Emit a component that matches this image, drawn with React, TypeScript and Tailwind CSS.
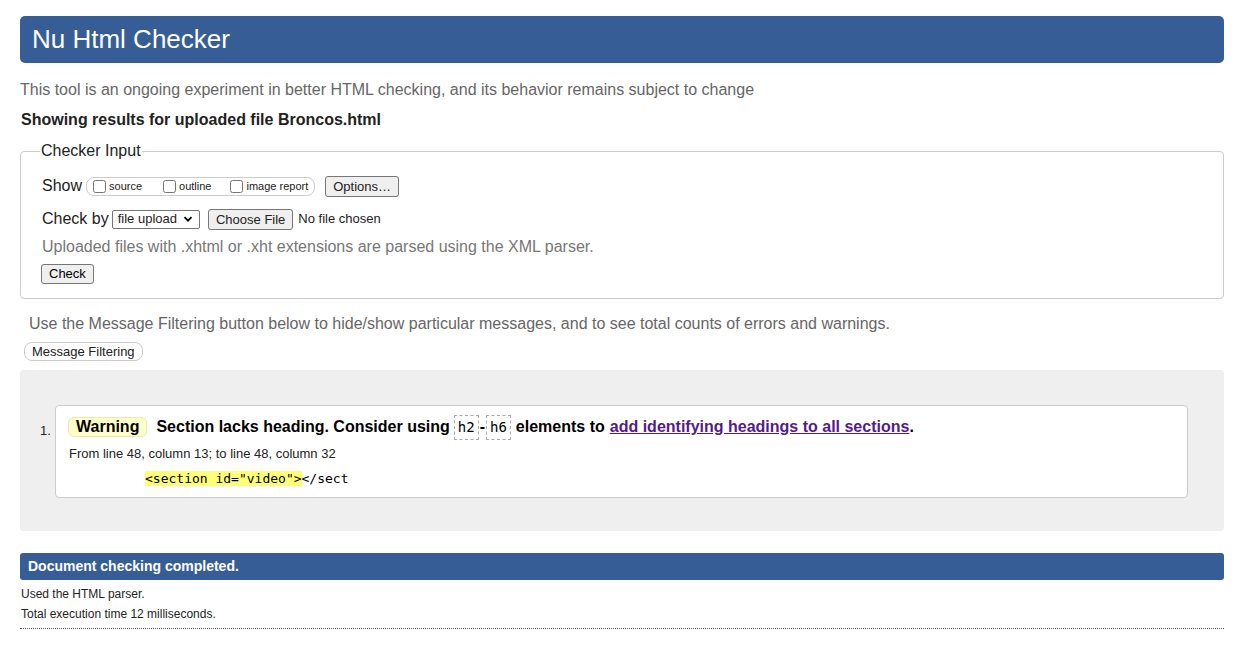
export default function App() {
  return (
    <div className="min-h-[663px] bg-white pl-5 pr-[15px] pt-4 text-black" style={{ fontFamily: '"Liberation Sans", Arial, sans-serif' }}>
      <h1 className="flex h-[47px] items-center rounded-[5px] bg-[#365d95] px-3 text-[26px] font-normal text-white">Nu Html Checker</h1>

      <p className="mt-[17px] text-[16px] leading-[20px] text-[#666]">
        This tool is an ongoing experiment in better HTML checking, and its behavior remains subject to change
      </p>
      <p className="mt-[10px] pl-px text-[16px] font-bold leading-[20px] text-[#222]">Showing results for uploaded file Broncos.html</p>

      <fieldset className="mt-[12px] rounded-[4px] border border-[#ccc] pb-[13px] pl-[21px] pr-4 pt-[14px]">
        <legend className="-ml-[2px] px-[1px] text-[16px] leading-[18px] text-[#222]">Checker Input</legend>
        <div className="flex items-center text-[16px] text-[#222]">
          <span>Show</span>
          <span className="ml-[4px] flex h-[19px] items-center rounded-[8px] border border-[#ccc] pl-[6px] pr-[6px] text-[11px]">
            <label className="flex items-center">
              <input type="checkbox" className="m-0 h-[13px] w-[13px]" />
              <span className="ml-[3px]">source</span>
            </label>
            <label className="ml-[21px] flex items-center">
              <input type="checkbox" className="m-0 h-[13px] w-[13px]" />
              <span className="ml-[3px]">outline</span>
            </label>
            <label className="ml-[19px] flex items-center">
              <input type="checkbox" className="m-0 h-[13px] w-[13px]" />
              <span className="ml-[3px]">image report</span>
            </label>
          </span>
          <button className="ml-[10px] h-[21px] rounded-[3px] border border-[#767676] bg-[#efefef] px-[7px] text-[13px] leading-[17px]">Options…</button>
        </div>
        <div className="mt-[9px] flex items-center text-[16px] text-[#222]">
          <span>Check by</span>
          <span className="ml-[3px] flex h-[19px] items-center rounded-[2px] border border-[#767676] pl-[5px] pr-[6px] text-[13px]">
            file upload
            <svg width="10" height="10" viewBox="0 0 10 10" className="ml-[6px]">
              <path d="M1.5 3.2 5 6.7 8.5 3.2" fill="none" stroke="#000" strokeWidth="1.8" />
            </svg>
          </span>
          <button className="ml-[8px] h-[21px] rounded-[3px] border border-[#767676] bg-[#efefef] px-[7px] text-[13px] leading-[17px]">Choose File</button>
          <span className="ml-[5px] text-[13px]">No file chosen</span>
        </div>
        <p className="mt-[6px] text-[16px] leading-[20px] text-[#777]">
          Uploaded files with .xhtml or .xht extensions are parsed using the XML parser.
        </p>
        <button className="mt-[7px] -ml-px h-[20px] rounded-[3px] border border-[#767676] bg-[#efefef] px-[7px] text-[13px] leading-[16px]">Check</button>
      </fieldset>

      <p className="mt-[15px] pl-[9px] text-[16px] leading-[20px] text-[#666]">
        Use the Message Filtering button below to hide/show particular messages, and to see total counts of errors and warnings.
      </p>
      <button className="ml-[4px] mt-[8px] h-[19px] rounded-[8px] border border-[#ccc] bg-white px-[7px] text-[13px] leading-[15px] text-[#222]">Message Filtering</button>

      <div className="mt-[7px] rounded-[4px] bg-[#efefef] pb-[33px] pl-[20px] pr-[36px] pt-[35px]">
        <ol className="flex">
          <li className="flex flex-1">
            <span className="w-[15px] pt-[16px] text-[13px] text-[#222]">1.</span>
            <div className="flex-1 rounded-[4px] border border-[#ccc] bg-white pb-[10px] pl-[12px] pr-4 pt-[8px]">
              <p className="flex items-center text-[16px] font-bold leading-[26px]">
                <span className="rounded-[6px] border border-[#eee8aa] bg-[#ffffcc] px-[7px] leading-[18px]">Warning</span>
                <span className="ml-[9px]">Section lacks heading. Consider using</span>
                <code className="ml-[4px] border border-dashed border-[#aaa] px-[3px] text-[14px] font-normal leading-[23px]" style={{ fontFamily: '"DejaVu Sans Mono", monospace' }}>h2</code>
                <span className="mx-px">-</span>
                <code className="border border-dashed border-[#aaa] px-[3px] text-[14px] font-normal leading-[23px]" style={{ fontFamily: '"DejaVu Sans Mono", monospace' }}>h6</code>
                <span className="ml-[5px]">elements to</span>
                <a href="#" className="ml-[5px] text-[#551a8b] underline">add identifying headings to all sections</a>
                <span>.</span>
              </p>
              <p className="mt-[6px] pl-px text-[13px] leading-[16px] text-[#222]">From line 48, column 13; to line 48, column 32</p>
              <p className="mt-[8px] pl-[77px] text-[13px] leading-[17px]" style={{ fontFamily: '"DejaVu Sans Mono", monospace' }}>
                <mark className="bg-[#ffff77] text-black">&lt;section id="video"&gt;</mark>&lt;/sect
              </p>
            </div>
          </li>
        </ol>
      </div>

      <div className="mt-[22px] flex h-[27px] items-center rounded-[3px] bg-[#365d95] px-2 text-[14px] font-bold text-white">Document checking completed.</div>
      <p className="mt-[6px] pl-px text-[12px] leading-[16px] text-[#222]">Used the HTML parser.</p>
      <p className="mt-[4px] pl-px text-[12px] leading-[16px] text-[#222]">Total execution time 12 milliseconds.</p>
      <div className="mt-[6px] border-b border-dotted border-[#555]" />
    </div>
  );
}
